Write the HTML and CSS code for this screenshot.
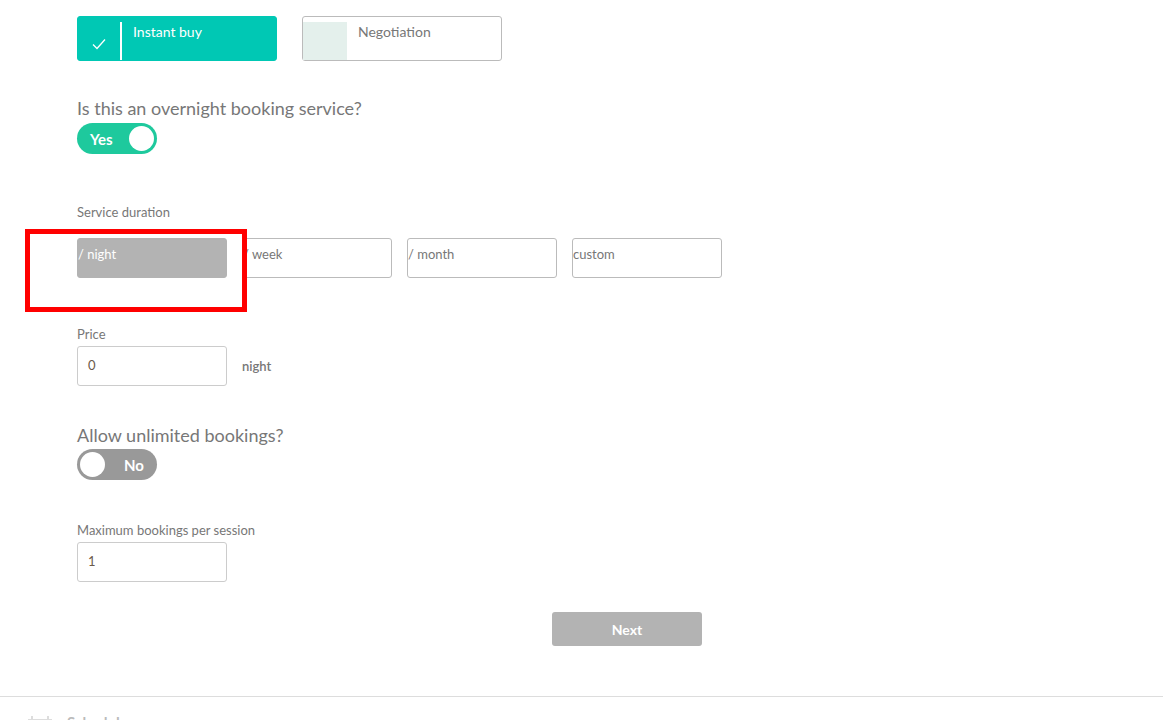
FILE: index.html
```html
<!DOCTYPE html>
<html lang="en">
<head>
    <meta charset="UTF-8">
    <meta name="viewport" content="width=device-width, initial-scale=1.0">
    <title>Service details</title>
    <link rel="stylesheet" href="styles.css">
</head>
<body>

    <div class="form">
        <div class="pay-options">
            <div class="pay-option selected">
                <div class="pay-mark">
                    <svg width="14" height="12" viewBox="0 0 14 12"><path d="M1 6.5 L5 10.5 L13 1.5" fill="none" stroke="#fff" stroke-width="1.3"/></svg>
                </div>
                <span class="pay-label">Instant buy</span>
            </div>
            <div class="pay-option">
                <div class="pay-mark"></div>
                <span class="pay-label">Negotiation</span>
            </div>
        </div>

        <h2 class="question">Is this an overnight booking service?</h2>
        <div class="toggle on">
            <span class="toggle-text">Yes</span>
            <span class="knob"></span>
        </div>

        <label class="field-label duration-label">Service duration</label>
        <div class="duration-row">
            <button class="duration active">/ night</button>
            <button class="duration">/ week</button>
            <button class="duration">/ month</button>
            <button class="duration">custom</button>
        </div>

        <label class="field-label price-label">Price</label>
        <div class="price-row">
            <div class="text-input">0</div>
            <span class="unit">night</span>
        </div>

        <h2 class="question second">Allow unlimited bookings?</h2>
        <div class="toggle off">
            <span class="knob"></span>
            <span class="toggle-text">No</span>
        </div>

        <label class="field-label max-label">Maximum bookings per session</label>
        <div class="text-input">1</div>

        <div class="actions">
            <button class="next-btn">Next</button>
        </div>
    </div>

    <div class="footer">
        <svg class="footer-logo" width="24" height="12" viewBox="0 0 24 12"><rect x="0" y="3" width="24" height="9" fill="#ddd"/><rect x="3" y="0" width="2" height="4" fill="#ddd"/><rect x="19" y="0" width="2" height="4" fill="#ddd"/></svg>
        <span class="footer-name">Schedule</span>
    </div>

    <!-- highlight marker -->
    <div class="highlight"></div>

</body>
</html>
```

FILE: styles.css
```css
body {
    margin: 0;
    padding: 0;
    font-family: Lato, "Open Sans", Arial, sans-serif;
    color: #777;
    background: #fff;
    overflow: hidden;
    height: 720px;
    position: relative;
}

.form {
    padding: 16px 0 0 77px;
    width: 660px;
}

/* payment options */
.pay-options {
    display: flex;
    gap: 25px;
}

.pay-option {
    width: 200px;
    height: 45px;
    box-sizing: border-box;
    border: 1px solid #bbb;
    border-radius: 3px;
    display: flex;
    align-items: flex-start;
    padding-top: 5px;
}

.pay-option.selected {
    background-color: #00c8b4;
    border-color: #00c8b4;
}

.pay-mark {
    width: 44px;
    height: 38px;
    background: #e4f0ec;
    display: flex;
    align-items: flex-end;
    justify-content: center;
    box-sizing: border-box;
}

.selected .pay-mark {
    background: transparent;
    border-right: 2px solid #fff;
    padding-bottom: 10px;
}

.pay-label {
    font-size: 14px;
    margin: 1px 0 0 11px;
    color: #777;
}

.selected .pay-label {
    color: #fff;
}

/* questions + toggles */
.question {
    font-size: 18px;
    font-weight: 400;
    color: #777;
    margin: 36px 0 4px 0;
    line-height: 22px;
}

.question.second {
    margin-top: 38px;
    margin-bottom: 3px;
}

.toggle {
    width: 80px;
    height: 31px;
    border-radius: 16px;
    display: flex;
    align-items: center;
    justify-content: space-between;
    box-sizing: border-box;
    padding: 0 3px 0 13px;
}

.toggle.on {
    background: #1ec99d;
}

.toggle.off {
    background: #999;
    padding: 0 13px 0 3px;
}

.toggle-text {
    color: #fff;
    font-weight: 700;
    font-size: 15px;
}

.knob {
    width: 25px;
    height: 25px;
    border-radius: 50%;
    background: #fff;
}

/* labels */
.field-label {
    display: block;
    font-size: 13px;
    line-height: 16px;
    color: #777;
}

.duration-label {
    margin-top: 50px;
}

.price-label {
    margin-top: 48px;
}

.max-label {
    margin-top: 42px;
}

/* duration buttons */
.duration-row {
    display: flex;
    gap: 15px;
    margin-top: 18px;
}

.duration {
    width: 150px;
    height: 40px;
    border: 1px solid #bbb;
    border-radius: 3px;
    background: #fff;
    font-family: inherit;
    font-size: 13px;
    color: #777;
    text-align: left;
    padding: 7px 0 0 0;
    display: flex;
    align-items: flex-start;
}

.duration.active {
    background: #b3b3b3;
    border-color: #b3b3b3;
    color: #fff;
}

/* inputs */
.price-row {
    display: flex;
    align-items: center;
    gap: 15px;
}

.text-input {
    width: 150px;
    height: 40px;
    box-sizing: border-box;
    border: 1px solid #ccc;
    border-radius: 3px;
    margin-top: 4px;
    padding: 10px 0 0 10px;
    font-size: 13px;
    color: #6b5a4a;
}

.unit {
    font-size: 13px;
    color: #777;
    font-weight: 600;
    margin-top: 4px;
}

/* next */
.actions {
    display: flex;
    margin-top: 30px;
    padding-left: 475px;
}

.next-btn {
    width: 150px;
    height: 34px;
    border: none;
    border-radius: 3px;
    background: #b3b3b3;
    color: #fff;
    font-family: inherit;
    font-weight: 700;
    font-size: 14px;
}

/* footer */
.footer {
    position: absolute;
    top: 696px;
    left: 0;
    right: 0;
    border-top: 1px solid #ddd;
    padding: 16px 0 0 28px;
    display: flex;
    align-items: center;
    gap: 15px;
}

.footer-name {
    font-size: 15px;
    color: #bbb;
    font-weight: 700;
}

/* red marker drawn over the first duration */
.highlight {
    position: absolute;
    left: 25px;
    top: 229px;
    width: 222px;
    height: 83px;
    box-sizing: border-box;
    border: 5px solid #ff0000;
}
```
